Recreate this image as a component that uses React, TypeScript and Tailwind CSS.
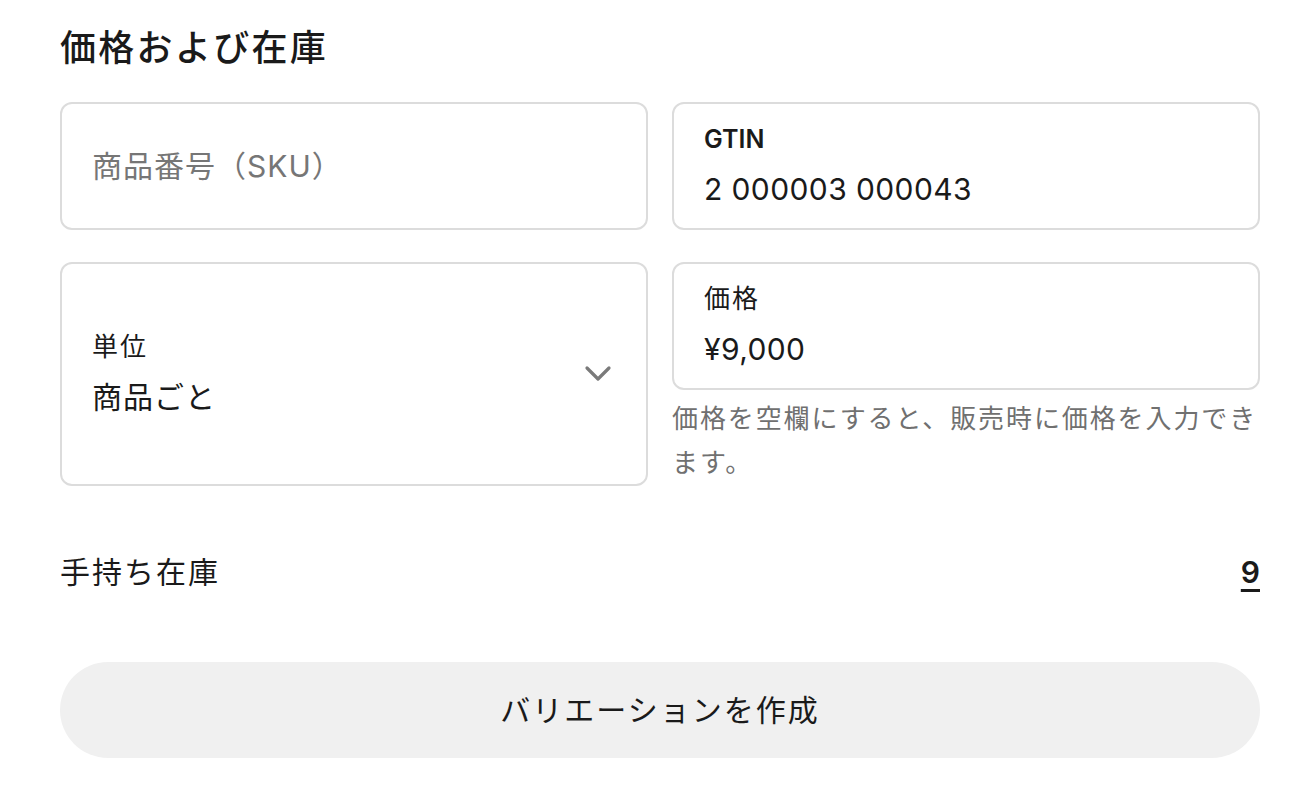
import React from "react";

const font = "font-['Inter','Noto_Sans_CJK_JP',sans-serif]";

function Field({ label, value, latin }: { label: string; value: string; latin?: boolean }) {
  return (
    <div className="h-[128px] rounded-[12px] border-2 border-[#dcdcdc] px-[30px] flex flex-col justify-center">
      <div
        className={`leading-8 text-[#1a1a1a] ${latin ? "text-[25px] font-semibold" : "text-[26px] tracking-[2px] font-normal"}`}
      >
        {label}
      </div>
      <div className="mt-[14px] text-[30px] leading-10 tracking-[0.4px] text-[#1a1a1a]">{value}</div>
    </div>
  );
}

export default function App() {
  return (
    <main className={`min-h-screen bg-white pl-[60px] pr-[56px] pt-6 text-[#1a1a1a] ${font}`}>
      <h2 className="text-[36px] leading-[48px] font-medium tracking-[2.3px]">価格および在庫</h2>

      <div className="mt-[30px] grid grid-cols-2 gap-x-6 gap-y-8 items-start">
        <div className="h-[128px] rounded-[12px] border-2 border-[#dcdcdc] px-[30px] flex items-center">
          <span className="text-[30px] leading-10 text-[#767676] tracking-[1px]">商品番号（SKU）</span>
        </div>

        <Field label="GTIN" value="2 000003 000043" latin />

        <div className="h-[224px] rounded-[12px] border-2 border-[#dcdcdc] pl-[30px] pr-[34px] flex items-center justify-between">
          <div className="flex flex-col">
            <div className="text-[26px] leading-8 tracking-[2px]">単位</div>
            <div className="mt-[14px] text-[30px] leading-10 tracking-[1px]">商品ごと</div>
          </div>
          <svg width="28" height="18" viewBox="0 0 28 18" fill="none" className="text-[#7a7a7a]">
            <path d="M3 3 L14 14 L25 3" stroke="currentColor" strokeWidth="3.2" strokeLinecap="round" strokeLinejoin="round" />
          </svg>
        </div>

        <div>
          <Field label="価格" value="¥9,000" />
          <p className="mt-[7px] text-[26px] leading-[44px] tracking-[1.9px] text-[#707070]">
            価格を空欄にすると、販売時に価格を入力できます。
          </p>
        </div>
      </div>

      <div className="mt-[66px] flex items-center justify-between">
        <span className="text-[30px] leading-10 tracking-[2px]">手持ち在庫</span>
        <a className="text-[30px] leading-10 font-semibold underline decoration-[3px] underline-offset-[6px]">9</a>
      </div>

      <button className="mt-[70px] w-full h-[96px] rounded-full bg-[#f0f0f0] text-[30px] font-normal tracking-[2px] text-[#1a1a1a]">
        バリエーションを作成
      </button>
    </main>
  );
}
